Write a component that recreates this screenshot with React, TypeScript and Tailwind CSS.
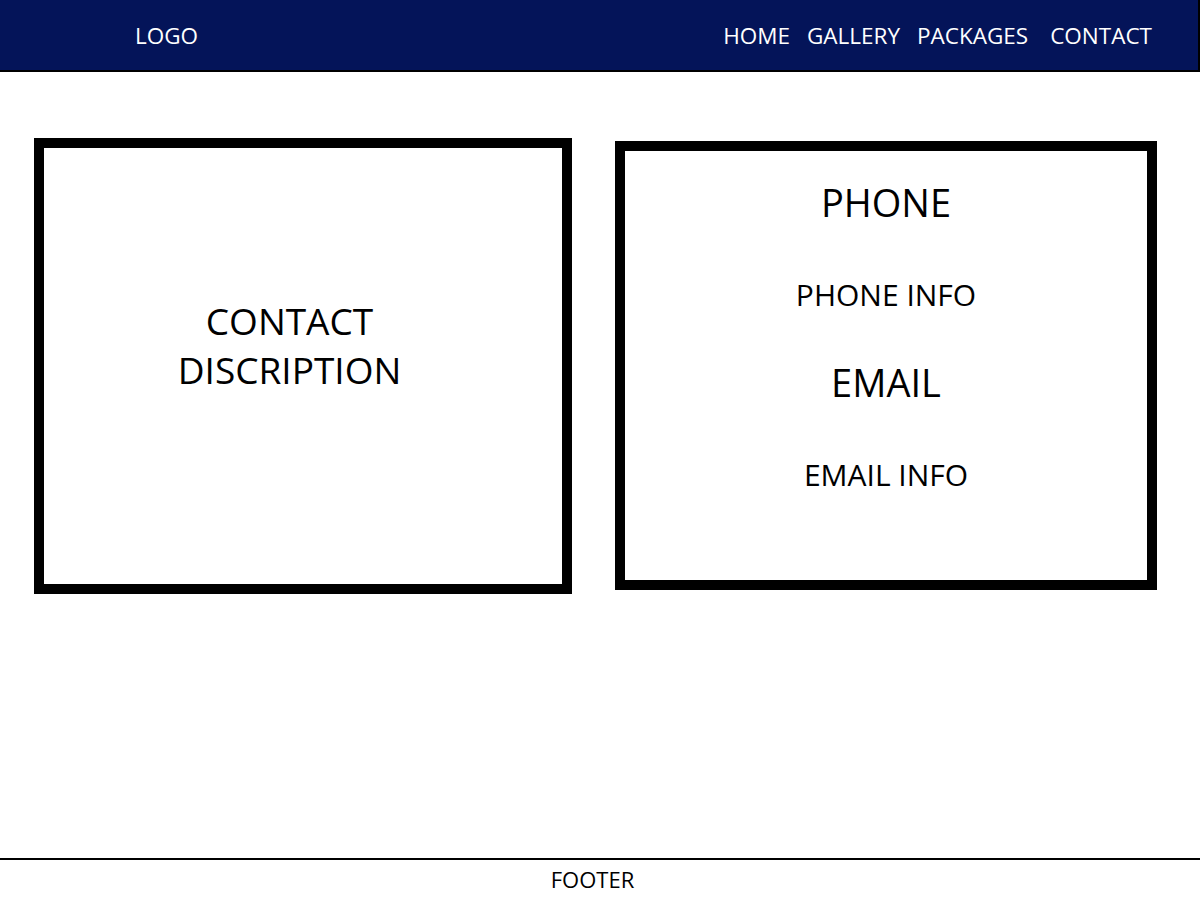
const NAV = ['HOME', 'GALLERY', 'PACKAGES', 'CONTACT'];

function Header() {
  return (
    <header className="flex h-[72px] items-center justify-between border-b-2 border-r-2 border-black bg-[#041459] pl-[135px] pr-[46px] pt-[3px] text-[22.5px] leading-none text-white">
      <span>LOGO</span>
      <nav className="flex items-center gap-[17px]">
        {NAV.map((item) => (
          <a key={item} href="#" className={item === 'CONTACT' ? 'ml-[5px]' : ''}>
            {item}
          </a>
        ))}
      </nav>
    </header>
  );
}

function ContactCard() {
  return (
    <section className="h-[456px] w-[538px] border-[10px] border-black pr-[27px] pt-[148px] text-center text-[37px] leading-[49px] text-black">
      <p>CONTACT</p>
      <p>DISCRIPTION</p>
    </section>
  );
}

function InfoCard() {
  return (
    <section className="mt-[3px] flex h-[449px] w-[542px] flex-col items-center border-[10px] border-black pt-[32px] leading-none text-black">
      <h2 className="text-[38px]">PHONE</h2>
      <p className="mt-[59px] text-[30px]">PHONE INFO</p>
      <h2 className="mt-[53px] text-[38px]">EMAIL</h2>
      <p className="mt-[59px] text-[30px]">EMAIL INFO</p>
    </section>
  );
}

export default function App() {
  return (
    <div className="flex h-[900px] w-[1200px] flex-col bg-white font-['Open_Sans',sans-serif]">
      <Header />
      <main className="flex flex-1 items-start gap-[43px] pl-[34px] pt-[66px]">
        <ContactCard />
        <InfoCard />
      </main>
      <footer className="h-[42px] border-t-2 border-black pr-[15px] pt-[8px] text-center text-[22px] leading-none text-black">
        FOOTER
      </footer>
    </div>
  );
}
